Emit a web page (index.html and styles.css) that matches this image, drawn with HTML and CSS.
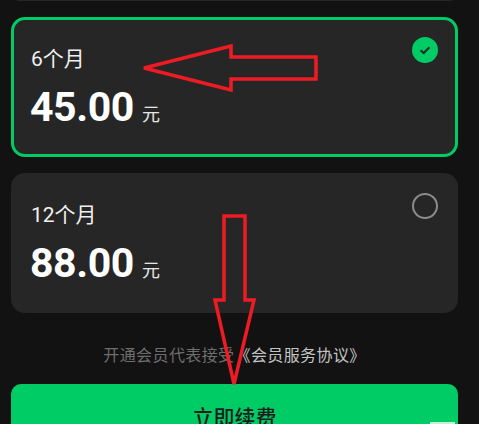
FILE: index.html
```html
<!DOCTYPE html>
<html lang="zh">
<head>
  <meta charset="UTF-8" />
  <meta name="viewport" content="width=device-width, initial-scale=1.0" />
  <title>立即续费</title>
  <link rel="stylesheet" href="styles.css">
</head>
<body>

<div class="page">
  <div class="plan-stub"></div>

  <div class="plan selected">
    <div class="plan-info">
      <div class="plan-name">6个月</div>
      <div class="plan-price"><span class="amount">45.00</span><span class="unit">元</span></div>
    </div>
    <span class="radio checked">
      <svg width="14" height="14" viewBox="0 0 14 14"><path d="M2.6 7.2 L5.7 10 L11.4 4.3" fill="none" stroke="#1c2a22" stroke-width="2"/></svg>
    </span>
  </div>

  <div class="plan">
    <div class="plan-info">
      <div class="plan-name">12个月</div>
      <div class="plan-price"><span class="amount">88.00</span><span class="unit">元</span></div>
    </div>
    <span class="radio"></span>
  </div>

  <div class="agreement">开通会员代表接受<a href="#">《会员服务协议》</a></div>

  <button type="button" class="renew">立即续费</button>
</div>

<!-- red arrows drawn over the screenshot -->
<svg class="arrows" width="479" height="424" viewBox="0 0 479 424">
  <path d="M144 68 L231 46 L231 57 L316 57 L316 79 L231 79 L231 90 Z" />
  <path d="M224 216 L245 216 L245 300 L254 300 L234 384 L215 300 L224 300 Z" />
</svg>

<div class="corner-mark"></div>

</body>
</html>
```

FILE: styles.css
```css
body {
  margin: 0;
  height: 424px;
  overflow: hidden;
  background-color: #121212;
  font-family: Roboto, "Noto Sans CJK SC", sans-serif;
  position: relative;
}

.page {
  display: flex;
  flex-direction: column;
  padding: 0 21px 0 11px;
}

.plan-stub {
  height: 1px;
  margin: 0 6px 16px;
  background-color: #262626;
  border-radius: 0 0 6px 6px;
}

.plan {
  height: 140px;
  box-sizing: border-box;
  display: flex;
  justify-content: space-between;
  align-items: flex-start;
  padding: 17px;
  margin-bottom: 16px;
  background-color: #262626;
  border: 3px solid transparent;
  border-radius: 14px;
}

.plan.selected {
  border-color: #00cc66;
}

.plan-name {
  margin-top: 8px;
  font-size: 21px;
  line-height: 28px;
  color: #f0f0f0;
}

.plan-price {
  display: flex;
  align-items: baseline;
  margin-top: 8px;
  margin-left: -1px;
  color: #fff;
}

.amount {
  font-size: 41px;
  line-height: 52px;
  font-weight: 700;
  letter-spacing: -0.4px;
}

.unit {
  margin-left: 8px;
  font-size: 18px;
  color: #e6e6e6;
}

.radio {
  width: 26px;
  height: 26px;
  box-sizing: border-box;
  border: 2px solid #8c8c8c;
  border-radius: 50%;
  display: flex;
  align-items: center;
  justify-content: center;
}

.radio.checked {
  background-color: #00cc66;
  border-color: #00cc66;
}

.agreement {
  margin-top: 15px;
  font-size: 16px;
  line-height: 24px;
  letter-spacing: 0.4px;
  text-align: center;
  color: #6e6e6e;
}

.agreement a {
  color: #c4c4c4;
  text-decoration: none;
}

.renew {
  margin-top: 16px;
  height: 60px;
  padding: 0;
  border: none;
  border-radius: 10px;
  background-color: #00cc66;
  color: #1c1c1c;
  font-family: inherit;
  font-size: 21px;
  font-weight: 500;
  line-height: 68px;
}

.arrows {
  position: absolute;
  top: 0;
  left: 0;
}

.arrows path {
  fill: none;
  stroke: #ed1c24;
  stroke-width: 3.5;
  stroke-linejoin: miter;
}

.corner-mark {
  position: absolute;
  left: 430px;
  top: 422px;
  width: 25px;
  height: 2px;
  background-color: #c8efd8;
}
```
